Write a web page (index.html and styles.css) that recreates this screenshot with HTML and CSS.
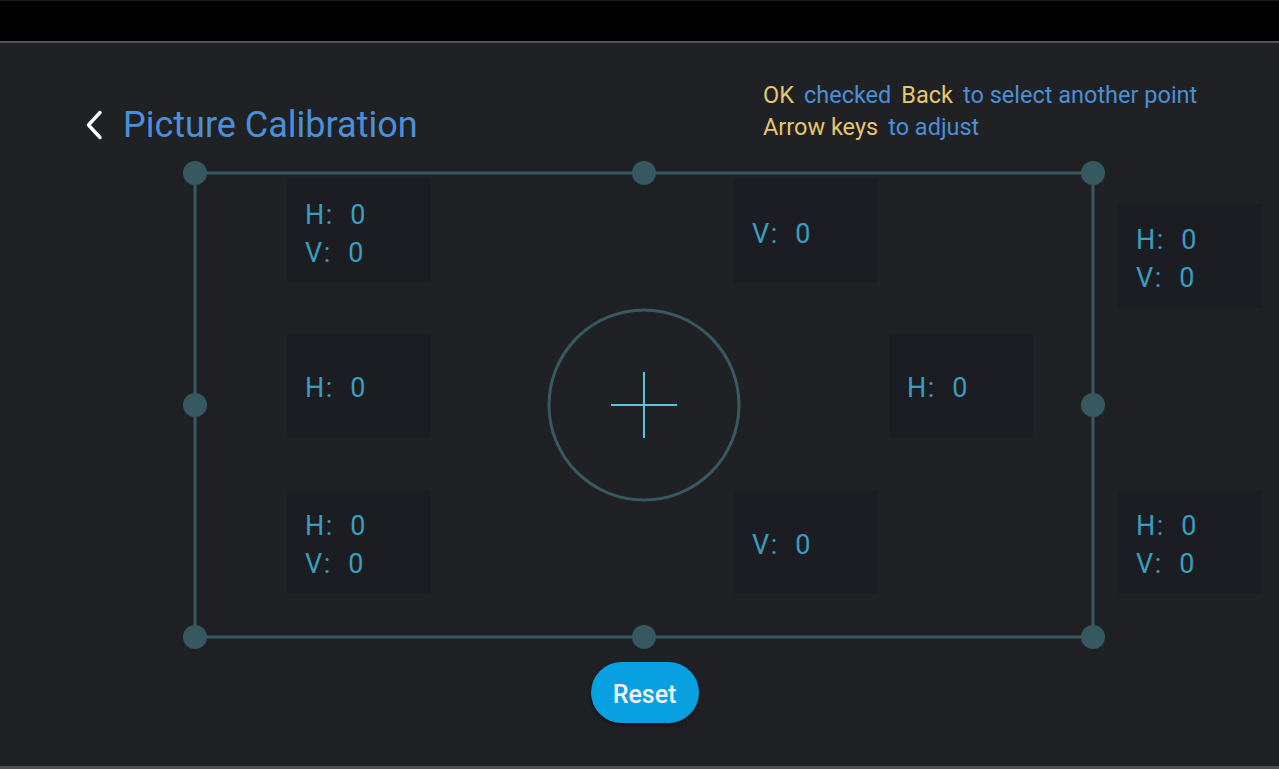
FILE: index.html
```html
<!DOCTYPE html>
<html lang="en">
<head>
<meta charset="utf-8">
<title>Picture Calibration</title>
<link rel="stylesheet" href="styles.css">
</head>
<body>
<div class="topbar"></div>
<header class="header">
  <div class="title">
    <svg class="back" width="20" height="30" viewBox="0 0 20 30"><path d="M15 2.5 L3.5 15 L15 27.5" fill="none" stroke="#ffffff" stroke-width="3.4" stroke-linecap="round" stroke-linejoin="round"/></svg>
    <h1>Picture Calibration</h1>
  </div>
  <div class="hints">
    <p><span class="key">OK</span><span class="txt">checked</span><span class="key">Back</span><span class="txt">to select another point</span></p>
    <p><span class="key">Arrow keys</span><span class="txt">to adjust</span></p>
  </div>
</header>
<main class="canvas">
  <svg class="frame" width="1279" height="500" viewBox="0 0 1279 500">
    <rect x="195" y="23" width="898" height="464" fill="none" stroke="#375a62" stroke-width="3"/>
    <circle cx="644" cy="255" r="95" fill="none" stroke="#375a62" stroke-width="3"/>
    <line x1="611" y1="255" x2="677" y2="255" stroke="#5cc3da" stroke-width="2"/>
    <line x1="644" y1="222" x2="644" y2="288" stroke="#5cc3da" stroke-width="2"/>
    <g fill="#365860">
      <circle cx="195" cy="23" r="12"/>
      <circle cx="644" cy="23" r="12"/>
      <circle cx="1093" cy="23" r="12"/>
      <circle cx="195" cy="255" r="12"/>
      <circle cx="1093" cy="255" r="12"/>
      <circle cx="195" cy="487" r="12"/>
      <circle cx="644" cy="487" r="12"/>
      <circle cx="1093" cy="487" r="12"/>
    </g>
  </svg>
  <div class="box b-tl"><span>H:  0</span><span>V:  0</span></div>
  <div class="box b-tm"><span>V:  0</span></div>
  <div class="box b-tr"><span>H:  0</span><span>V:  0</span></div>
  <div class="box b-ml"><span>H:  0</span></div>
  <div class="box b-mr"><span>H:  0</span></div>
  <div class="box b-bl"><span>H:  0</span><span>V:  0</span></div>
  <div class="box b-bm"><span>V:  0</span></div>
  <div class="box b-br"><span>H:  0</span><span>V:  0</span></div>
</main>
<div class="actions">
  <button class="reset">Reset</button>
</div>
<footer class="bottom"></footer>
</body>
</html>
```
FILE: styles.css
```css
html, body {
  margin: 0;
  padding: 0;
}
body {
  width: 1279px;
  height: 769px;
  background: #202124;
  font-family: Roboto, "Noto Sans", sans-serif;
  display: flex;
  flex-direction: column;
  overflow: hidden;
}
.topbar {
  height: 40px;
  background: #000;
  border-top: 1px solid #1c1c1c;
  border-bottom: 2px solid #4a5661;
  flex: none;
}
.header {
  height: 107px;
  display: flex;
  padding-left: 85px;
  box-sizing: border-box;
  flex: none;
}
.title {
  width: 678px;
  display: flex;
  align-items: center;
  align-self: flex-start;
  margin-top: 61px;
  height: 42px;
}
.back {
  display: block;
  margin-right: 18px;
}
.title h1 {
  margin: 0;
  font-size: 36px;
  line-height: 42px;
  font-weight: 400;
  color: #4a90d8;
}
.hints {
  margin-top: 36px;
}
.hints p {
  margin: 0;
  font-size: 23.5px;
  line-height: 32px;
  display: flex;
  gap: 10px;
}
.key {
  color: #e5c772;
}
.txt {
  color: #4a90d8;
}
.canvas {
  position: relative;
  height: 500px;
  flex: none;
}
.frame {
  position: absolute;
  left: 0;
  top: 0;
}
.box {
  position: absolute;
  width: 144px;
  height: 104px;
  box-sizing: border-box;
  padding-left: 18px;
  padding-top: 5px;
  background: #1c1d22;
  display: flex;
  flex-direction: column;
  justify-content: center;
  color: #3a9dbf;
  font-size: 27px;
  line-height: 38px;
  letter-spacing: 1.5px;
  white-space: pre;
}
.b-tl { left: 287px; top: 29px; }
.b-tm { left: 734px; top: 29px; }
.b-tr { left: 1118px; top: 54px; }
.b-ml { left: 287px; top: 183px; }
.b-mr { left: 889px; top: 183px; }
.b-bl { left: 287px; top: 340px; }
.b-bm { left: 734px; top: 340px; }
.b-br { left: 1118px; top: 340px; }
.actions {
  display: flex;
  justify-content: center;
  padding-left: 10px;
  margin-top: 12px;
  flex: none;
}
.reset {
  width: 108px;
  height: 61px;
  border: none;
  border-radius: 31px;
  background: #08a0e1;
  color: #f2f2f2;
  font-family: Roboto, sans-serif;
  font-size: 25px;
  font-weight: 500;
  padding: 3px 0 0;
  box-shadow: 0 2px 4px rgba(0, 0, 0, 0.45);
}
.bottom {
  margin-top: auto;
  height: 3px;
  background: #4e4f50;
  flex: none;
}
```
